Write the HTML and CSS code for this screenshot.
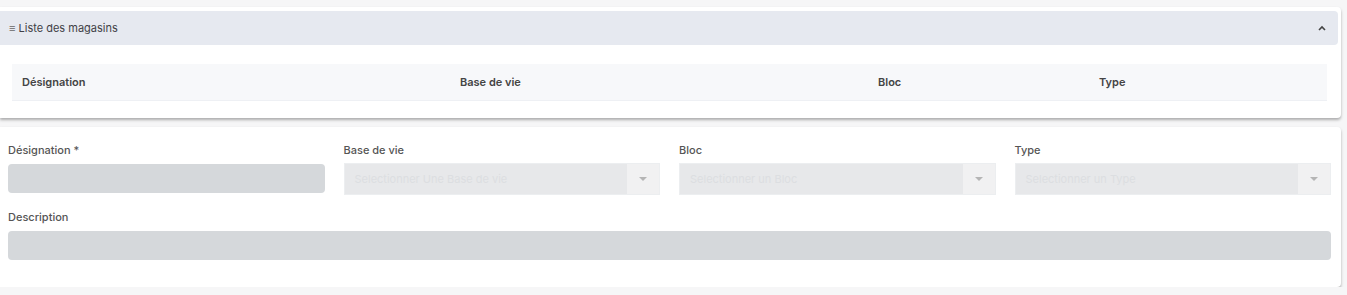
FILE: index.html
```html
<!DOCTYPE html>
<html lang="fr">

<head>
    <meta charset="UTF-8">
    <meta name="viewport" content="width=device-width, initial-scale=1.0">
    <title>Magasins</title>
    <link rel="stylesheet" href="styles.css">
</head>

<body>
    <div class="card list-card">
        <div class="card-header">
            <span class="title"><span class="burger">&#8801;</span> Liste des magasins</span>
            <svg class="chevron" width="8" height="6" viewBox="0 0 8 6">
                <path d="M1 5 L4 2 L7 5" fill="none" stroke="#444" stroke-width="1.6"/>
            </svg>
        </div>
        <div class="table-wrap">
            <table class="table">
                <thead>
                    <tr>
                        <th class="col-1">Désignation</th>
                        <th class="col-2">Base de vie</th>
                        <th class="col-3">Bloc</th>
                        <th>Type</th>
                    </tr>
                </thead>
            </table>
        </div>
    </div>

    <div class="card form-card">
        <div class="form-row">
            <div class="form-group">
                <label>Désignation *</label>
                <input type="text" class="input" disabled>
            </div>
            <div class="form-group">
                <label>Base de vie</label>
                <div class="select">
                    <span class="placeholder">Selectionner Une Base de vie</span>
                    <span class="arrow"></span>
                </div>
            </div>
            <div class="form-group">
                <label>Bloc</label>
                <div class="select">
                    <span class="placeholder">Selectionner un Bloc</span>
                    <span class="arrow"></span>
                </div>
            </div>
            <div class="form-group">
                <label>Type</label>
                <div class="select">
                    <span class="placeholder">Selectionner un Type</span>
                    <span class="arrow"></span>
                </div>
            </div>
        </div>
        <div class="form-group">
            <label>Description</label>
            <input type="text" class="input" disabled>
        </div>
    </div>
</body>
</html>
```

FILE: styles.css
```css
body {
    font-family: Inter, "Open Sans", sans-serif;
    background-color: #f6f6f7;
    color: #444;
    margin: 0;
    padding: 7px 6px 0 0;
}

.card {
    background-color: #fff;
    border-radius: 0 4px 4px 0;
    box-shadow: 0 2px 3px rgba(0, 0, 0, 0.3);
}

.list-card {
    padding: 4px 3px 17px 0;
    height: 90px;
}

.card-header {
    display: flex;
    align-items: center;
    justify-content: space-between;
    height: 34px;
    padding: 0 12px 0 9px;
    background-color: #e6e9f0;
    border-radius: 0 4px 4px 0;
    font-size: 11px;
    color: #3f3f46;
}

.burger {
    font-size: 11px;
    color: #666;
}

.table-wrap {
    padding: 19px 11px 0 12px;
}

.table {
    width: 100%;
    border-collapse: collapse;
    background-color: #f7f8fa;
    border-bottom: 1px solid #eef0f4;
}

.table th {
    height: 36px;
    padding: 0 10px;
    text-align: left;
    font-size: 11px;
    font-weight: 600;
    color: #444;
}

.table .col-1 {
    width: 418px;
}

.table .col-2 {
    width: 398px;
}

.table .col-3 {
    width: 201px;
}

.form-card {
    margin-top: 9px;
    padding: 16px 10px 27px 8px;
}

.form-row {
    display: grid;
    grid-template-columns: repeat(4, 1fr);
    gap: 19px;
    margin-bottom: 15px;
}

.form-group label {
    display: block;
    font-size: 11px;
    font-weight: 500;
    color: #555;
    margin-bottom: 7px;
    line-height: 14px;
}

.input {
    display: block;
    box-sizing: border-box;
    width: 100%;
    height: 29px;
    border: none;
    border-radius: 4px;
    background-color: #d5d8db;
}

.select {
    display: flex;
    height: 32px;
    margin-top: -1px;
    background-color: #e7e8ea;
    border: 1px solid #eceef0;
    box-sizing: border-box;
}

.placeholder {
    flex: 1;
    padding-left: 10px;
    line-height: 30px;
    font-size: 11px;
    color: #dcdee1;
}

.arrow {
    width: 32px;
    background-color: #f1f1f2;
    position: relative;
}

.arrow::after {
    content: "";
    position: absolute;
    left: 12px;
    top: 13px;
    border-left: 4px solid transparent;
    border-right: 4px solid transparent;
    border-top: 4px solid #b5b5b5;
}
```
